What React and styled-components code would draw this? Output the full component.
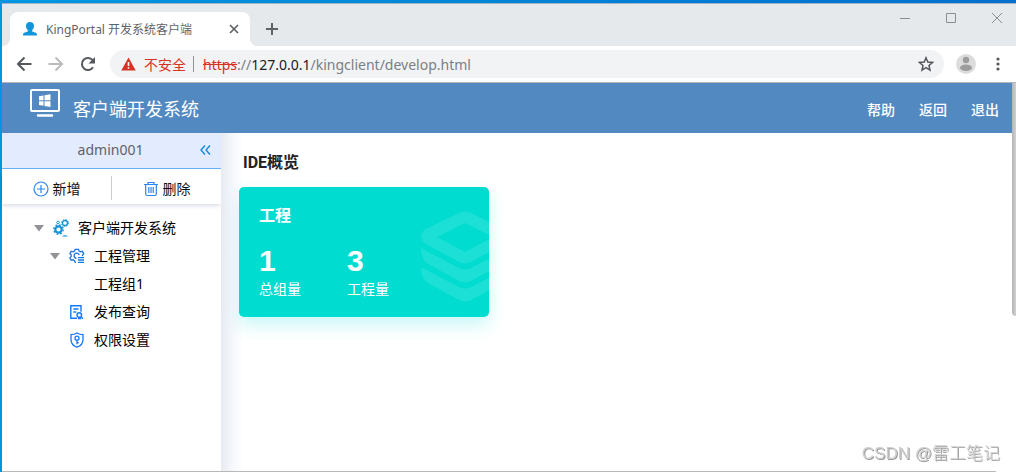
import React from "react";
import styled, { createGlobalStyle } from "styled-components";

const GlobalStyle = createGlobalStyle`
  *, *::before, *::after { box-sizing: border-box; }
  body { margin: 0; background: #fff; font-family: "Noto Sans", "Noto Sans CJK SC", sans-serif; }
  button { border: 0; padding: 0; background: none; font: inherit; color: inherit; cursor: pointer; }
  a { color: inherit; text-decoration: none; }
  h1, h2, h3, p, ul, dl, dd { margin: 0; padding: 0; }
  svg { display: block; flex: none; }
`;

const Desktop = styled.div`
  min-height: 100vh;
  display: flex;
  flex-direction: column;
  padding: 3px 0 0 2px;
  background: linear-gradient(to right, #0097e0, #0070cf);
`;

const Browser = styled.div`
  flex: 1;
  display: flex;
  flex-direction: column;
  border-top: 1px solid #a5b4c2;
  background: #fff;
`;

const TabStrip = styled.div`
  display: flex;
  align-items: flex-end;
  height: 42px;
  padding-left: 8px;
  background: #e5e9ec;
  color: #5f6368;
`;

const Tab = styled.div`
  position: relative;
  display: flex;
  align-items: center;
  gap: 8px;
  width: 240px;
  height: 34px;
  padding: 0 10px 0 12px;
  border-radius: 8px 8px 0 0;
  background: #fff;
  font-size: 12px;

  &::before, &::after {
    content: "";
    position: absolute;
    bottom: 0;
    width: 8px;
    height: 8px;
  }
  &::before {
    left: -8px;
    background: radial-gradient(circle at 0 0, transparent 8px, #fff 8px);
  }
  &::after {
    right: -8px;
    background: radial-gradient(circle at 100% 0, transparent 8px, #fff 8px);
  }
`;

const TabTitle = styled.span`
  flex: 1;
  white-space: nowrap;
`;

const NewTab = styled.button`
  margin: 0 0 10px 15px;
`;

const WindowControls = styled.div`
  display: flex;
  align-self: flex-start;
  gap: 34px;
  margin: 8px 13px 0 auto;
  color: #8b8f92;
`;

const Toolbar = styled.div`
  display: flex;
  align-items: center;
  height: 37px;
  padding: 0 16px 0 14px;
  border-bottom: 1px solid #b5b3b3;
  color: #55595e;
`;

const NavButtons = styled.div`
  display: flex;
  gap: 16px;
  margin-right: 14px;
`;

const AddressBar = styled.div`
  flex: 1;
  display: flex;
  align-items: center;
  height: 28px;
  padding: 0 10px 0 11px;
  border-radius: 14px;
  background: #f1f3f4;
  font-size: 14px;
`;

const Security = styled.button`
  display: flex;
  align-items: center;
  gap: 8px;
  height: 16px;
  padding-right: 7px;
  border-right: 1px solid #909498;
  color: #d93025;
`;

const Url = styled.div`
  flex: 1;
  padding-left: 9px;
  color: #7a7f84;
  white-space: nowrap;
  outline: none;

  s { color: #d93025; }
  b { color: #202124; font-weight: 400; }
`;

const ToolbarEnd = styled.div`
  display: flex;
  align-items: center;
  gap: 20px;
  margin-left: 12px;
`;

const Viewport = styled.div`
  flex: 1;
  display: flex;
`;

const Page = styled.div`
  flex: 1;
  display: flex;
  flex-direction: column;
`;

const ScrollTrack = styled.div`
  display: flex;
  flex-direction: column;
  width: 4px;
  background: #fff;
`;

const ScrollThumb = styled.div`
  height: 60%;
  border-radius: 0 0 0 4px;
  background: linear-gradient(to right, #b5b5b5, #d0d0d0);
`;

const AppHeader = styled.header`
  display: flex;
  align-items: center;
  height: 50px;
  padding: 0 13px 0 28px;
  background: #5389c1;
  color: #fff;
`;

const Brand = styled.div`
  display: flex;
  gap: 13px;
`;

const BrandIcon = styled.span`
  padding-bottom: 10px;
`;

const BrandTitle = styled.h1`
  padding-top: 8px;
  font-size: 18px;
  line-height: 24px;
  font-weight: 400;
`;

const HeaderNav = styled.nav`
  display: flex;
  gap: 24px;
  margin-left: auto;
  padding-top: 4px;
  font-size: 14px;
  line-height: 20px;
  font-weight: 500;
`;

const Body = styled.div`
  flex: 1;
  display: flex;
`;

const Sidebar = styled.aside`
  width: 219px;
  background: #fff;
`;

const UserBar = styled.div`
  display: flex;
  align-items: center;
  height: 36px;
  padding: 0 10px 2px 14px;
  border-bottom: 1px solid #66b4f8;
  background: #e3ebff;
  color: #606266;
  font-size: 14px;
  line-height: 20px;
`;

const UserName = styled.span`
  flex: 1;
  text-align: center;
  padding-left: 6px;
`;

const Actions = styled.div`
  display: flex;
  align-items: center;
  height: 35px;
  padding-top: 2px;
  box-shadow: 0 2px 4px rgba(60, 80, 140, 0.18);
`;

const ActionButton = styled.button`
  flex: 1;
  display: flex;
  align-items: center;
  justify-content: center;
  gap: 4px;
  height: 24px;
  padding-top: 2px;
  font-size: 14px;
  line-height: 20px;
  color: #111;

  & + & { border-left: 1px solid #ccc; }
`;

const Tree = styled.ul`
  padding-top: 10px;
  list-style: none;
`;

const TreeItem = styled.li`
  display: flex;
  align-items: center;
  height: 28px;
  padding-left: ${(p) => 32 + p.$level * 16}px;
  font-size: 14px;
  line-height: 20px;
  color: #000;
`;

const Toggle = styled.span`
  display: flex;
  width: 19px;
`;

const TreeIcon = styled.span`
  display: flex;
  width: 25px;
`;

const Main = styled.main`
  flex: 1;
  padding: 18px;
  background: linear-gradient(to right, #e7eaf2, #f4f6fb 10px, #fff 22px);
`;

const SectionTitle = styled.h2`
  padding-left: 4px;
  font-family: Roboto, "Noto Sans CJK SC", sans-serif;
  font-size: 16px;
  line-height: 24px;
  font-weight: 700;
  color: #222;
`;

const Card = styled.section`
  display: flex;
  justify-content: space-between;
  width: 250px;
  height: 130px;
  margin-top: 12px;
  border-radius: 5px;
  overflow: hidden;
  background: #00dcd0;
  box-shadow: 0 8px 18px rgba(0, 220, 220, 0.22);
  color: #fff;
`;

const CardInfo = styled.div`
  padding: 16px 0 0 20px;
`;

const CardTitle = styled.h3`
  font-size: 16px;
  line-height: 24px;
  font-weight: 700;
`;

const Stats = styled.dl`
  display: flex;
  gap: 46px;
  margin-top: 16px;
`;

const Stat = styled.div`
  display: flex;
  flex-direction: column-reverse;
`;

const StatLabel = styled.dt`
  font-size: 14px;
  line-height: 20px;
`;

const StatValue = styled.dd`
  font-family: "Liberation Sans", sans-serif;
  font-size: 30px;
  line-height: 36px;
  font-weight: 700;
`;

const CardArt = styled.div`
  padding-top: 24px;
`;

const BottomEdge = styled.div`
  height: 1px;
  margin-right: 20px;
  background: #b8b8b8;
`;

const Watermark = styled.div`
  position: fixed;
  right: 16px;
  bottom: 6px;
  font-family: "Liberation Sans", "Noto Sans CJK SC", sans-serif;
  font-size: 17px;
  line-height: 24px;
  font-weight: 300;
  color: #cfcfcf;
  text-shadow: 1px 1px 0 #999;
`;

function Line({ size = 16, d, width = 2, children }) {
  return (
    <svg width={size} height={size} viewBox={`0 0 ${size} ${size}`} fill="none" stroke="currentColor" strokeWidth={width}>
      {d && <path d={d} />}
      {children}
    </svg>
  );
}

const PersonIcon = () => (
  <svg width="16" height="16" viewBox="0 0 16 16" fill="#1296db">
    <path d="M8 1c2.500 0 4 1.500 4 4 0 1.800-.8 3.300-1.800 4.100v1.300l3.600 1.300c.9.400 1.200 1.100 1.200 2.800H1c0-1.700.3-2.400 1.200-2.800l3.600-1.300V9.100C4.800 8.300 4 6.800 4 5c0-2.500 1.500-4 4-4z" />
  </svg>
);

const ReloadIcon = () => (
  <svg width="16" height="16" viewBox="0 0 16 16">
    <path d="M13 11.200A6 6 0 1 1 12.600 4.200" fill="none" stroke="currentColor" strokeWidth="2" />
    <path d="M15 1v6.500H8.500z" fill="currentColor" />
  </svg>
);

const WarningIcon = () => (
  <svg width="15" height="14" viewBox="0 0 15 14">
    <path d="M7.500 .5 14.700 13.500H.3z" fill="#d93025" />
    <path d="M7.500 5v4M7.500 10.200v1.600" stroke="#fff" strokeWidth="1.600" />
  </svg>
);

const AvatarIcon = () => (
  <svg width="20" height="20" viewBox="0 0 20 20">
    <circle cx="10" cy="10" r="10" fill="#dcdcdc" />
    <circle cx="10" cy="6" r="3.200" fill="#9c9c9c" />
    <ellipse cx="10" cy="13.800" rx="6" ry="3.200" fill="#9c9c9c" />
  </svg>
);

const MenuIcon = () => (
  <svg width="4" height="14" viewBox="0 0 4 14" fill="currentColor">
    <circle cx="2" cy="2" r="1.600" />
    <circle cx="2" cy="7" r="1.600" />
    <circle cx="2" cy="12" r="1.600" />
  </svg>
);

const MonitorIcon = () => (
  <svg width="30" height="28" viewBox="0 0 30 28">
    <rect x="1" y="1" width="28" height="21" rx="1" fill="none" stroke="#fff" strokeWidth="2" />
    <path d="M8 26.500h14" stroke="#fff" strokeWidth="2.400" strokeLinecap="round" />
    <path d="M9 7.200l4.500-.8v4.800H9zM14.500 6.200l6-1v6h-6zM9 12.200h4.500v4.600L9 16zM14.500 12.200h6v5.800l-6-1z" fill="#fff" />
  </svg>
);

const PlusCircleIcon = () => (
  <Line width={1.2}>
    <g stroke="#2b85f5">
      <circle cx="8" cy="8" r="7" />
      <path d="M8 4v8M4 8h8" />
    </g>
  </Line>
);

const TrashIcon = () => (
  <Line width={1.2}>
    <g stroke="#2b85f5">
      <path d="M1 3.500h14M5 3V1.500h6V3M2.700 3.500v9.500c0 1 .5 1.500 1.500 1.500h7.600c1 0 1.500-.5 1.500-1.500V3.500M5.800 6v6M8 6v6M10.200 6v6" />
    </g>
  </Line>
);

const CaretIcon = () => (
  <svg width="10" height="7" viewBox="0 0 10 7" fill="#919398">
    <path d="M0 0h10L5 6.500z" />
  </svg>
);

const GearsIcon = () => (
  <svg width="18" height="18" viewBox="0 0 18 18" fill="none" stroke="#1593d8">
    <circle cx="5.500" cy="10.500" r="3.200" strokeWidth="2.200" />
    <circle cx="5.500" cy="10.500" r="4.700" strokeWidth="1.400" strokeDasharray="1.850 1.840" />
    <circle cx="12" cy="4" r="2.500" strokeWidth="1.300" />
    <circle cx="12" cy="4" r="3.500" strokeWidth="1" strokeDasharray="1.400 1.350" />
    <circle cx="5" cy="3.500" r="1.300" strokeWidth=".9" />
    <path d="M9 17.500c1.500-1.800 4.500-1.800 6 0z" fill="#1593d8" stroke="none" />
  </svg>
);

const GearListIcon = () => (
  <svg width="16" height="16" viewBox="0 0 16 16" fill="none" stroke="#1677e8" strokeWidth="1.300">
    <path d="M7 14.300h-.8l-.7-1.700-1.400-.8-1.900.5L.9 9.900l1.300-1.300V7L.9 5.700l1.300-2.400 1.900.5L5.500 3l.7-1.700h3.200L10.100 3l1.400.8 1.900-.5 1.400 2.400L13.500 7v1.200" />
    <path d="M7.500 10.300A2.600 2.600 0 1 1 10.300 7.200M9 9.600h6M9 12h6M9 14.400h6" />
  </svg>
);

const DocSearchIcon = () => (
  <svg width="16" height="16" viewBox="0 0 16 16" fill="none" stroke="#1677ff" strokeWidth="1.400">
    <path d="M8 14.300H1.800V1.700H12v6M4.300 5h5.200M4.300 8h3" />
    <circle cx="10.300" cy="11" r="2.300" />
    <path d="M12 12.700l2 2M9 14.500h3" />
  </svg>
);

const ShieldIcon = () => (
  <svg width="16" height="16" viewBox="0 0 16 16" fill="none" stroke="#1677ff" strokeWidth="1.300">
    <path d="M8 1c2 1.300 3.800 1.700 6 1.700v5c0 3.400-2.200 6-6 7.500-3.800-1.500-6-4.100-6-7.500v-5C4.200 2.700 6 2.300 8 1z" />
    <circle cx="8" cy="6.200" r="2" />
    <path d="M8 8.200v4M8 10.600h1.800" />
  </svg>
);

const LayersArt = () => (
  <svg width="68" height="92" viewBox="0 0 68 92" fill="#fff" fillOpacity=".11">
    <path fillRule="evenodd" d="M38 2q6-3 12 0L84 19q6 5 0 13L50 51q-6 3-12 0L3 32q-6-6 0-13zM44 12 16 26 44 41 72 26z" />
    <path d="M0 37 38 57q6 3 12 0L88 37v5q0 6-5 10L50 70q-6 3-12 0L7 53q-7-5-7-16z" />
    <path d="M0 56 38 76q6 3 12 0L88 56v5q0 6-5 10L50 89q-6 3-12 0L7 72q-7-5-7-16z" />
  </svg>
);

const TREE = [
  { label: "客户端开发系统", level: 0, open: true, icon: <GearsIcon /> },
  { label: "工程管理", level: 1, open: true, icon: <GearListIcon /> },
  { label: "工程组1", level: 1 },
  { label: "发布查询", level: 1, icon: <DocSearchIcon /> },
  { label: "权限设置", level: 1, icon: <ShieldIcon /> },
];

export default function App() {
  return (
    <Desktop>
      <GlobalStyle />
      <Browser>
        <TabStrip>
          <Tab>
            <PersonIcon />
            <TabTitle>KingPortal 开发系统客户端</TabTitle>
            <button aria-label="关闭标签页">
              <Line size={12} d="M2 2l8 8M10 2l-8 8" width={1.7} />
            </button>
          </Tab>
          <NewTab aria-label="新标签页">
            <Line size={14} d="M7 1v12M1 7h12" />
          </NewTab>
          <WindowControls>
            <button aria-label="最小化"><Line size={12} d="M1 6.500h10" width={1} /></button>
            <button aria-label="最大化"><Line size={12} d="M1.500 1.500h9v9h-9z" width={1} /></button>
            <button aria-label="关闭"><Line size={12} d="M1 1l10 10M11 1L1 11" width={1} /></button>
          </WindowControls>
        </TabStrip>
        <Toolbar>
          <NavButtons>
            <button aria-label="后退"><Line d="M15.500 8H3M8.500 1.500L2 8l6.500 6.500" /></button>
            <button aria-label="前进" disabled>
              <Line><path d="M.5 8H13M7.500 1.500L14 8l-6.500 6.500" stroke="#b9bbbd" /></Line>
            </button>
            <button aria-label="重新加载"><ReloadIcon /></button>
          </NavButtons>
          <AddressBar>
            <Security><WarningIcon />不安全</Security>
            <Url role="textbox" aria-label="地址" contentEditable suppressContentEditableWarning spellCheck={false}>
              <s>https</s>://<b>127.0.0.1</b>/kingclient/develop.html
            </Url>
            <button aria-label="收藏">
              <Line d="M8 1.800l1.800 4.300 4.700.4-3.500 3 1 4.600L8 11.700l-4 2.400 1-4.600-3.500-3 4.700-.4z" width={1.5} />
            </button>
          </AddressBar>
          <ToolbarEnd>
            <button aria-label="用户"><AvatarIcon /></button>
            <button aria-label="菜单"><MenuIcon /></button>
          </ToolbarEnd>
        </Toolbar>
        <Viewport>
          <Page>
            <AppHeader>
              <Brand>
                <BrandIcon><MonitorIcon /></BrandIcon>
                <BrandTitle>客户端开发系统</BrandTitle>
              </Brand>
              <HeaderNav>
                <a href="#help">帮助</a>
                <a href="#back">返回</a>
                <a href="#logout">退出</a>
              </HeaderNav>
            </AppHeader>
            <Body>
              <Sidebar>
                <UserBar>
                  <UserName>admin001</UserName>
                  <button aria-label="收起">
                    <Line size={12}><path d="M6 1.500L2 6l4 4.500M11 1.500L7 6l4 4.500" stroke="#1389dc" strokeWidth="1.400" /></Line>
                  </button>
                </UserBar>
                <Actions>
                  <ActionButton><PlusCircleIcon />新增</ActionButton>
                  <ActionButton><TrashIcon />删除</ActionButton>
                </Actions>
                <Tree>
                  {TREE.map((n) => (
                    <TreeItem key={n.label} $level={n.level}>
                      <Toggle>{n.open && <CaretIcon />}</Toggle>
                      <TreeIcon>{n.icon}</TreeIcon>
                      {n.label}
                    </TreeItem>
                  ))}
                </Tree>
              </Sidebar>
              <Main>
                <SectionTitle>IDE概览</SectionTitle>
                <Card>
                  <CardInfo>
                    <CardTitle>工程</CardTitle>
                    <Stats>
                      <Stat><StatLabel>总组量</StatLabel><StatValue>1</StatValue></Stat>
                      <Stat><StatLabel>工程量</StatLabel><StatValue>3</StatValue></Stat>
                    </Stats>
                  </CardInfo>
                  <CardArt><LayersArt /></CardArt>
                </Card>
              </Main>
            </Body>
          </Page>
          <ScrollTrack><ScrollThumb /></ScrollTrack>
        </Viewport>
        <BottomEdge />
      </Browser>
      <Watermark>CSDN @雷工笔记</Watermark>
    </Desktop>
  );
}
